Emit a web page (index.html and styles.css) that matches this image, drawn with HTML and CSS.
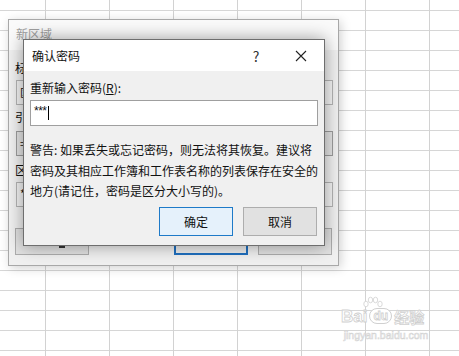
FILE: index.html
```html
<!DOCTYPE html>
<html lang="zh-CN">
<head>
    <meta charset="UTF-8">
    <meta name="viewport" content="width=device-width, initial-scale=1.0">
    <title>确认密码</title>
    <link rel="stylesheet" href="styles.css">
</head>
<body>
    <!-- dialog behind: 新区域 -->
    <div class="window back">
        <div class="back-title">新区域</div>
        <div class="back-body">
            <div class="back-label">标</div>
            <div class="field field-one"><span class="field-icon">区</span></div>
            <div class="back-label">引</div>
            <div class="field field-two"><span class="field-text">=</span></div>
            <div class="back-label check">区</div>
            <div class="field"><span class="field-text">*</span></div>
            <div class="back-buttons">
                <div class="back-btn"><span class="mark"></span></div>
                <div class="back-btn default"></div>
                <div class="back-btn"></div>
            </div>
        </div>
    </div>

    <!-- front dialog: 确认密码 -->
    <div class="window front">
        <div class="titlebar">
            <span class="title">确认密码</span>
            <span class="help">?</span>
            <span class="close">
                <svg width="12" height="12" viewBox="0 0 12 12">
                    <path d="M1 1 L11 11 M11 1 L1 11" stroke="#222" stroke-width="1.1" fill="none"/>
                </svg>
            </span>
        </div>
        <div class="body">
            <div class="label">重新输入密码(<u>R</u>):</div>
            <div class="password"><span class="stars">***</span><span class="caret"></span></div>
            <p class="warning">
                <span class="line">警告: 如果丢失或忘记密码，则无法将其恢复。建议将</span>
                <span class="line">密码及其相应工作簿和工作表名称的列表保存在安全的</span>
                <span class="line">地方(请记住，密码是区分大小写的)。</span>
            </p>
            <div class="buttons">
                <button class="btn primary">确定</button>
                <button class="btn">取消</button>
            </div>
        </div>
    </div>

    <div class="watermark">
        <svg class="wm-paw" width="24" height="12" viewBox="0 0 24 12">
            <g fill="#fff" stroke="#d0d0d0" stroke-width="0.8">
                <ellipse cx="5" cy="8" rx="2.2" ry="2.8"/>
                <ellipse cx="9.5" cy="4" rx="2.2" ry="2.8"/>
                <ellipse cx="14.5" cy="4" rx="2.2" ry="2.8"/>
                <ellipse cx="19" cy="8" rx="2.2" ry="2.8"/>
            </g>
        </svg>
        <div class="wm-logo"><span class="wm-bai">Bai</span><span class="wm-du">du</span><span class="wm-jy">经验</span></div>
        <div class="wm-url">jingyan.baidu.com</div>
    </div>
</body>
</html>
```

FILE: styles.css
```css
body {
    margin: 0;
    width: 459px;
    height: 356px;
    overflow: hidden;
    position: relative;
    font-family: "Noto Sans CJK SC", sans-serif;
    font-size: 12px;
    color: #111;
    background-color: #fff;
    background-image:
        linear-gradient(to right, #d2d2d2 1px, transparent 1px),
        linear-gradient(to bottom, #d6d6d6 1px, transparent 1px);
    background-size: 64px 20px;
    background-position: 45px 10px;
}

.window {
    position: absolute;
    box-sizing: border-box;
    background: #f0f0f0;
}

/* back dialog */
.back {
    left: 8px;
    top: 19px;
    width: 331px;
    height: 247px;
    border: 1px solid #a8a8a8;
    box-shadow: 2px 2px 10px rgba(0, 0, 0, 0.18);
}
.back-title {
    height: 30px;
    line-height: 28px;
    padding-left: 7px;
    background: #fafafa;
    color: #a0a0a0;
}
.back-body {
    padding: 0 5px 0 7px;
}
.back-label {
    height: 17px;
    line-height: 17px;
    margin-top: 9px;
    margin-left: -1px;
}
.back-label + .field {
    margin-top: 4px;
}
.field {
    box-sizing: border-box;
    height: 25px;
    border: 1px solid #b4b4b4;
    background: #f3f3f3;
    line-height: 22px;
    padding-left: 3px;
}
.field-one {
    margin-top: 4px;
}
.field-one + .back-label {
    margin-top: 3px;
}
.field-two {
    margin-top: 6px !important;
    background: #e4e4e4;
    border-color: #9c9c9c;
}
.field-two + .back-label {
    margin-top: 5px;
}
.check + .field {
    margin-top: 4px;
}
.field-icon {
    font-size: 11px;
}
.back-buttons {
    display: flex;
    margin-top: 21px;
    margin-left: -1px;
}
.back-btn {
    box-sizing: border-box;
    width: 74px;
    height: 27px;
    border: 1px solid #adadad;
    background: #e1e1e1;
    margin-right: 85px;
    position: relative;
}
.back-btn.default {
    border: 2px solid #1f6fbf;
    background: #ececec;
    margin-right: 10px;
}
.back-btn:last-child {
    margin-right: 0;
}
.mark {
    position: absolute;
    left: 43px;
    top: 16px;
    width: 6px;
    height: 3px;
    background: #333;
}

/* front dialog */
.front {
    left: 23px;
    top: 39px;
    width: 302px;
    height: 207px;
    border: 1px solid #6e6e6e;
    box-shadow: 0 0 16px rgba(0, 0, 0, 0.38);
}
.titlebar {
    display: flex;
    align-items: center;
    height: 31px;
    background: #fff;
    padding-right: 8px;
}
.title {
    flex: 1;
    padding-left: 8px;
}
.help {
    width: 30px;
    text-align: center;
    font-size: 14px;
    color: #333;
}
.close {
    width: 30px;
    margin-left: 15px;
    display: flex;
    justify-content: center;
}
.body {
    padding: 8px 6px 9px 6px;
}
.label {
    height: 17px;
    line-height: 17px;
}
.password {
    box-sizing: border-box;
    display: flex;
    align-items: flex-start;
    height: 26px;
    margin-top: 4px;
    padding: 4px 0 0 3px;
    border: 1px solid #9f9f9f;
    background: #fff;
}
.stars {
    font-family: "Liberation Sans", sans-serif;
    font-size: 12px;
    line-height: 12px;
    letter-spacing: -0.5px;
}
.caret {
    width: 1px;
    height: 14px;
    margin-top: 1px;
    margin-left: 1px;
    background: #000;
}
.warning {
    margin: 14px 0 0 0;
    line-height: 20.5px;
}
.line {
    display: block;
    white-space: nowrap;
}
.buttons {
    display: flex;
    justify-content: flex-end;
    gap: 10px;
    margin-top: 5px;
    margin-right: 1px;
}
.btn {
    box-sizing: border-box;
    width: 74px;
    height: 29px;
    border: 1px solid #adadad;
    background: #e1e1e1;
    font-family: inherit;
    font-size: 12px;
    color: #111;
    padding: 0;
}
.btn.primary {
    border-color: #1e7ac8;
    background: #e5f1fb;
}

/* baidu watermark */
.watermark {
    position: absolute;
    left: 341px;
    top: 296px;
    width: 90px;
    text-align: center;
    color: #fff;
}
.wm-paw {
    display: block;
    margin-left: 20px;
    margin-bottom: -8px;
}
.wm-logo {
    display: flex;
    align-items: flex-end;
    height: 26px;
    -webkit-text-stroke: 0.8px #d0d0d0;
}
.wm-bai {
    font-family: "Liberation Sans", sans-serif;
    font-weight: bold;
    font-size: 17px;
    line-height: 18px;
}
.wm-du {
    font-family: "Liberation Sans", sans-serif;
    font-weight: bold;
    font-size: 12px;
    line-height: 14px;
    margin: 0 2px 2px 2px;
    padding: 0 3px;
    border: 1px solid #d0d0d0;
    border-radius: 8px;
    background: #fff;
}
.wm-jy {
    font-size: 15px;
    line-height: 18px;
    font-weight: bold;
}
.wm-url {
    font-family: "Liberation Sans", sans-serif;
    font-size: 10.5px;
    margin-top: 3px;
    -webkit-text-stroke: 0.6px #d4d4d4;
}
```
